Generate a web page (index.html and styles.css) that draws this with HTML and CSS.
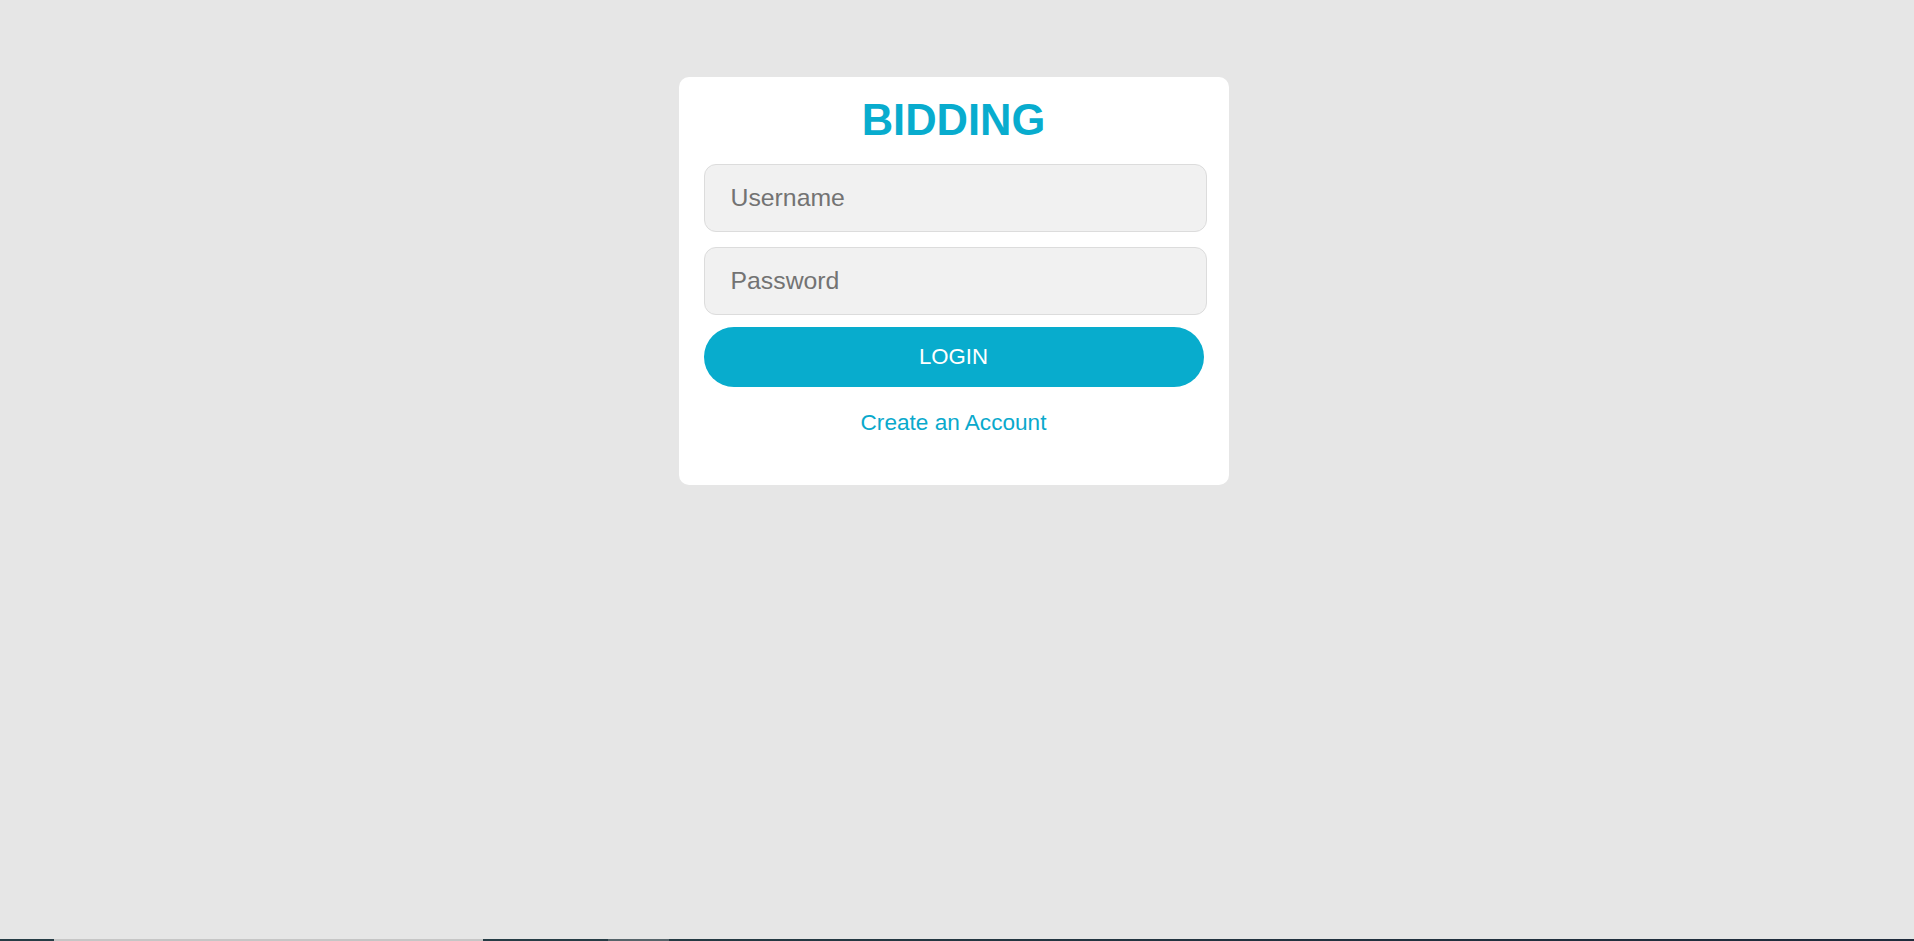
FILE: index.html
```html
<!DOCTYPE html>
<html lang="en">
<head>
<meta charset="utf-8">
<title>Bidding - Login</title>
<link rel="stylesheet" href="styles.css">
</head>
<body>
<main class="page">
  <form class="card">
    <h1 class="title">BIDDING</h1>
    <input class="field" type="text" placeholder="Username">
    <input class="field" type="password" placeholder="Password">
    <button class="login" type="button">LOGIN</button>
    <a class="create" href="#">Create an Account</a>
  </form>
</main>
<div class="taskbar">
  <span class="seg seg-a"></span>
  <span class="seg seg-b"></span>
  <span class="seg seg-c"></span>
  <span class="seg seg-d"></span>
  <span class="seg seg-e"></span>
</div>
</body>
</html>
```
FILE: styles.css
```css
* { box-sizing: border-box; }

html, body { height: 100%; }

body {
  margin: 0;
  background: #e6e6e6;
  font-family: "Liberation Sans", Arial, sans-serif;
  display: flex;
  flex-direction: column;
}

.page {
  flex: 1;
  display: flex;
  justify-content: center;
  align-items: flex-start;
  padding: 77px 7px 0 0;
}

.card {
  width: 550px;
  background: #ffffff;
  border-radius: 10px;
  padding: 18px 25px 50px 25px;
  display: flex;
  flex-direction: column;
  align-items: flex-start;
}

.title {
  align-self: stretch;
  margin: 0 0 19px 0;
  text-align: center;
  font-size: 43.5px;
  line-height: 50px;
  font-weight: bold;
  color: #08acce;
}

.field {
  width: calc(100% + 3px);
  height: 68px;
  margin: 0 0 15px 0;
  padding: 0 26px;
  border: 1px solid #dcdcdc;
  border-radius: 12px;
  background: #f1f1f1;
  font-family: "Liberation Sans", Arial, sans-serif;
  font-size: 24.8px;
  color: #333;
  outline: none;
}

.field + .field { margin-bottom: 12px; }

.field::placeholder { color: #737373; opacity: 1; }

.login {
  width: 100%;
  height: 60px;
  border: none;
  border-radius: 30px;
  background: #08accd;
  color: #ffffff;
  font-family: "Liberation Sans", Arial, sans-serif;
  font-size: 22.2px;
  cursor: pointer;
}

.create {
  align-self: center;
  margin-top: 24px;
  font-size: 22.6px;
  line-height: 24px;
  color: #0aa9cc;
  text-decoration: none;
}

.taskbar {
  height: 2px;
  display: flex;
}

.seg { display: block; height: 2px; }
.seg-a { width: 54px; background: #263c45; }
.seg-b { width: 429px; background: #c6c6c6; }
.seg-c { width: 125px; background: #263c45; }
.seg-d { width: 61px; background: #56646a; }
.seg-e { flex: 1; background: linear-gradient(to right, #243a43, #1f2b3c); }
```
